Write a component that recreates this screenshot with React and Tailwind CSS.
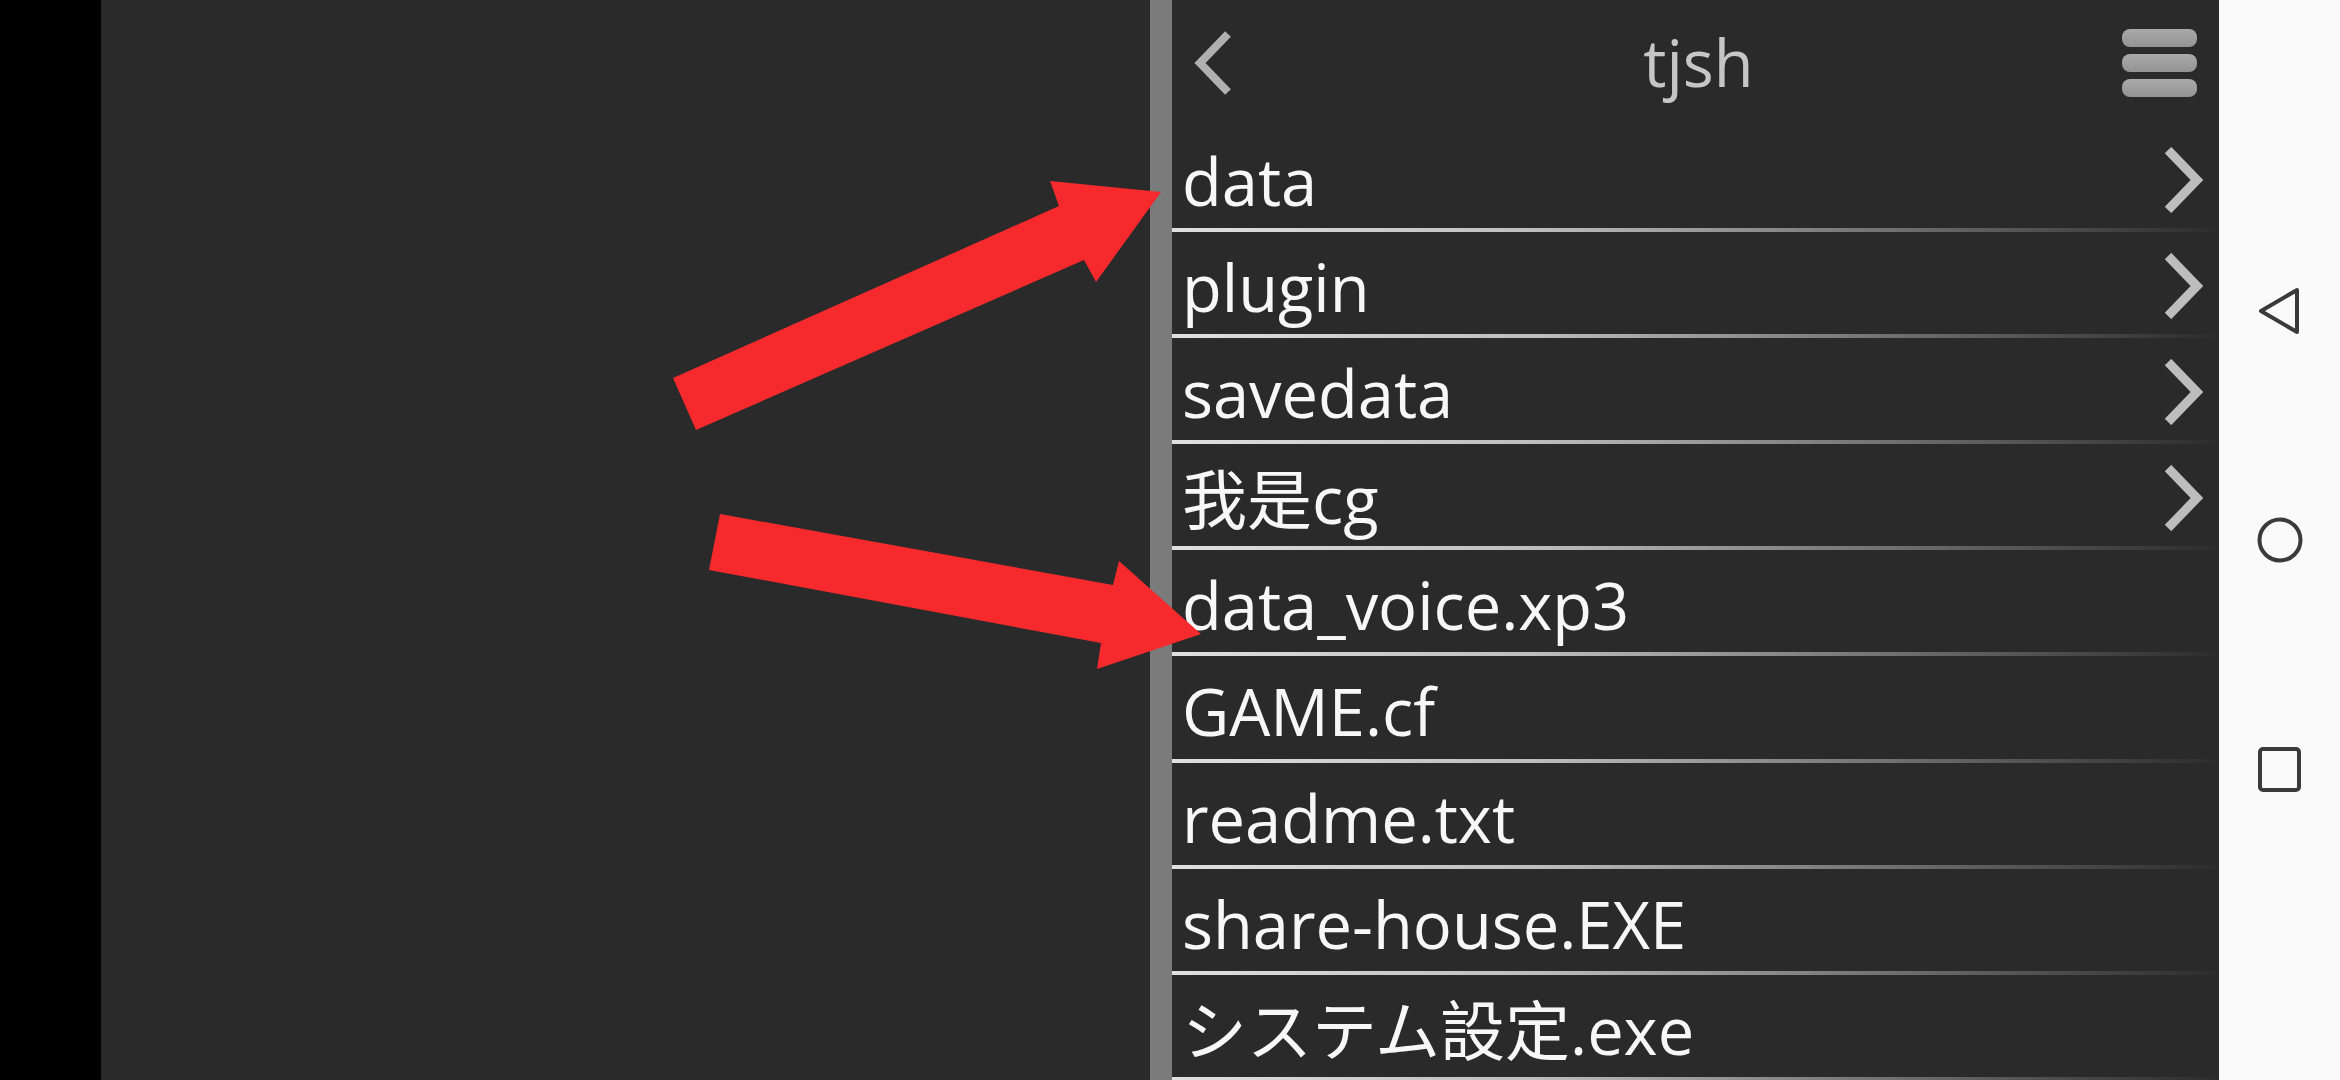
import React from "react";

const rows = [
  { name: "data", dir: true },
  { name: "plugin", dir: true },
  { name: "savedata", dir: true },
  { name: "我是cg", dir: true },
  { name: "data_voice.xp3" },
  { name: "GAME.cf" },
  { name: "readme.txt" },
  { name: "share-house.EXE" },
  { name: "システム設定.exe" },
];

const font = { fontFamily: '"Open Sans", "Noto Sans CJK SC", "Noto Sans CJK JP", sans-serif' };

function RightChevron() {
  return (
    <svg width="40" height="66" viewBox="0 0 40 66" className="shrink-0">
      <polyline points="4,3 33,33 4,63" fill="none" stroke="#bdbdbd" strokeWidth="9" strokeLinejoin="miter" strokeLinecap="butt" />
    </svg>
  );
}

function BackChevron() {
  return (
    <svg width="38" height="64" viewBox="0 0 38 64">
      <polyline points="34,3 6,32 34,61" fill="none" stroke="#b0b0b0" strokeWidth="8" strokeLinejoin="miter" strokeLinecap="butt" />
    </svg>
  );
}

function Hamburger() {
  return (
    <div className="flex flex-col gap-[7px]">
      <div className="h-[18px] w-[75px] rounded-[8px] bg-[linear-gradient(to_bottom,#aaaaaa,#939393)]" />
      <div className="h-[18px] w-[75px] rounded-[8px] bg-[linear-gradient(to_bottom,#aaaaaa,#939393)]" />
      <div className="h-[18px] w-[75px] rounded-[8px] bg-[linear-gradient(to_bottom,#aaaaaa,#939393)]" />
    </div>
  );
}

export default function App() {
  return (
    <div className="relative flex h-[1080px] w-[2340px] overflow-hidden bg-black" style={font}>
      <div className="w-[101px] shrink-0 bg-black" />
      <div className="w-[1049px] shrink-0 bg-[#2a2a2a]" />
      <div className="w-[22px] shrink-0 bg-[#7b7b7b]" />
      <div className="flex w-[1047px] shrink-0 flex-col bg-[#2a2a2a]">
        <div className="grid h-[126px] shrink-0 grid-cols-[1fr_auto_1fr] items-center px-[22px]">
          <div className="flex items-center">
            <BackChevron />
          </div>
          <div className="pl-[6px] text-[65px] leading-normal text-[#c6c6c6]">tjsh</div>
          <div className="flex justify-end">
            <Hamburger />
          </div>
        </div>
        {rows.map((r) => (
          <div key={r.name} className="shrink-0">
            <div className="flex h-[102.1px] items-start justify-between pl-[10px] pr-[15px]">
              <span className="pt-[7px] text-[65px] leading-normal whitespace-nowrap text-[#f7f7f7]">{r.name}</span>
              {r.dir && (
                <div className="mt-[21px]">
                  <RightChevron />
                </div>
              )}
            </div>
            <div className="h-[4px] bg-[linear-gradient(to_right,#e0e0e0,#bdbdbd_35%,#8f8f8f_55%,#4c4c4c_85%,#2c2c2c)]" />
          </div>
        ))}
      </div>
      <div className="flex w-[121px] shrink-0 flex-col items-center justify-center gap-[182px] bg-[#fafafa]">
        <svg width="48" height="48" viewBox="0 0 48 48">
          <path d="M5 25 L41 4 L41 46 Z" fill="none" stroke="#3a3a3a" strokeWidth="4" strokeLinejoin="round" />
        </svg>
        <svg width="48" height="48" viewBox="0 0 48 48">
          <circle cx="24" cy="24" r="20.5" fill="none" stroke="#3a3a3a" strokeWidth="4" />
        </svg>
        <svg width="48" height="48" viewBox="0 0 48 48">
          <rect x="4" y="3" width="39" height="41" rx="3" fill="none" stroke="#3a3a3a" strokeWidth="4" />
        </svg>
      </div>
      <svg className="pointer-events-none absolute left-0 top-0" width="2340" height="1080" viewBox="0 0 2340 1080">
        <polygon points="673,378 1059,206 1050,181 1161,192 1096,282 1084,260 696,430" fill="#f62a2c" />
        <polygon points="720,514 1113,585 1119,561 1201,634 1097,669 1101,643 709,570" fill="#f62a2c" />
      </svg>
    </div>
  );
}
